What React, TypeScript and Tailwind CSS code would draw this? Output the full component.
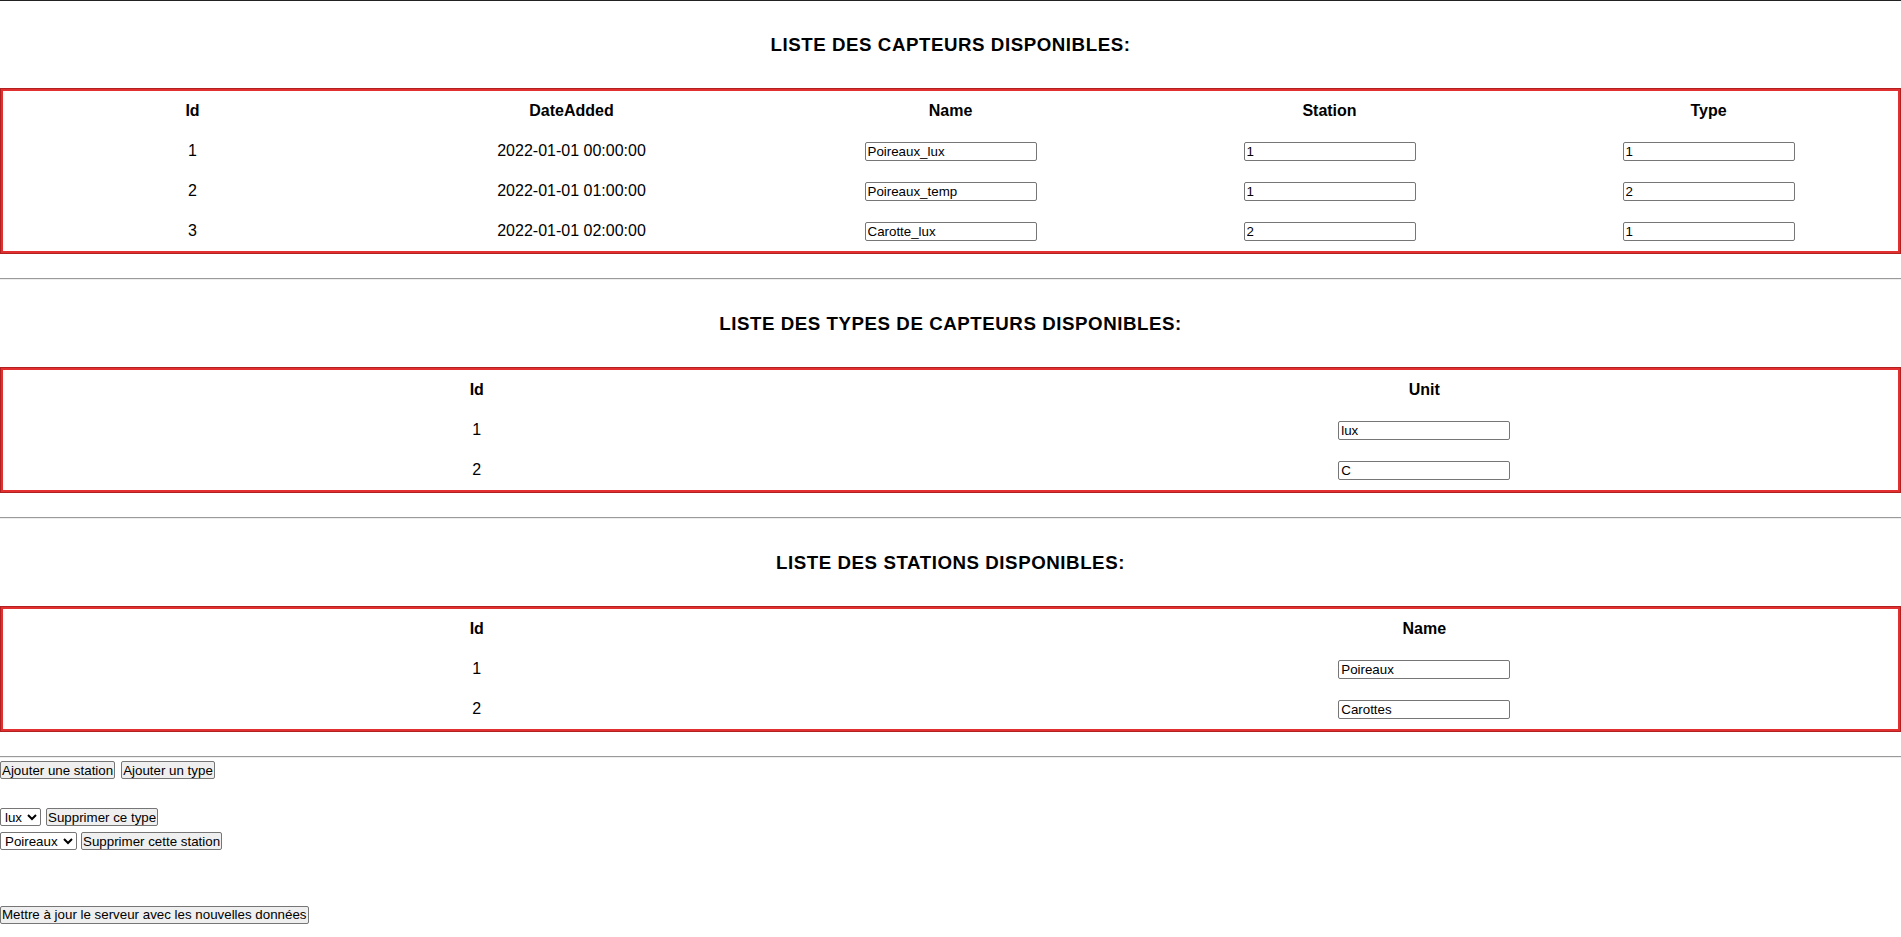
const SENSORS = [
  { id: 1, date: '2022-01-01 00:00:00', name: 'Poireaux_lux', station: '1', type: '1' },
  { id: 2, date: '2022-01-01 01:00:00', name: 'Poireaux_temp', station: '1', type: '2' },
  { id: 3, date: '2022-01-01 02:00:00', name: 'Carotte_lux', station: '2', type: '1' },
]

const TYPES = [
  { id: 1, unit: 'lux' },
  { id: 2, unit: 'C' },
]

const STATIONS = [
  { id: 1, name: 'Poireaux' },
  { id: 2, name: 'Carottes' },
]

const font = "font-['Liberation_Sans',Arial,sans-serif]"

function Field({ value }: { value: string }) {
  return (
    <input
      defaultValue={value}
      className="w-[172px] h-[19px] border border-[#767676] rounded-[2px] bg-white px-[2px] text-left text-[13.33px] leading-[15px] text-black align-middle"
    />
  )
}

function Heading({ children }: { children: string }) {
  return (
    <div className="h-[87px] flex items-center justify-center">
      <h3 className="text-[18.72px] font-bold tracking-[0.55px] leading-[22px]">{children}</h3>
    </div>
  )
}

function Table({ cols, rows }: { cols: string[]; rows: React.ReactNode[][] }) {
  return (
    <div className="border border-[#b32020]">
      <table className="w-full table-fixed border-separate border-spacing-0 border-2 border-[#e23030]">
        <thead>
          <tr>
            {cols.map(c => (
              <th key={c} className="h-[40px] p-0 font-bold text-center align-middle">{c}</th>
            ))}
          </tr>
        </thead>
        <tbody>
          {rows.map((r, i) => (
            <tr key={i}>
              {r.map((cell, j) => (
                <td key={j} className="h-[40px] p-0 text-center align-middle">{cell}</td>
              ))}
            </tr>
          ))}
        </tbody>
      </table>
    </div>
  )
}

function Rule() {
  return <div className="mt-[24px] h-[2px] border-t border-t-[#9a9a9a] border-b border-b-[#eeeeee]" />
}

const btn = 'h-[18px] px-[1px] border border-[#767676] rounded-[2px] bg-[#efefef] text-[13.33px] leading-[15px] text-black whitespace-nowrap'
const sel = 'h-[18px] border border-[#767676] rounded-[2px] bg-white text-[13.33px] leading-[15px] text-black'

export default function App() {
  return (
    <div className={`${font} min-h-[937px] bg-white text-black text-[16px]`}>
      <div className="h-px bg-[#222]" />

      <Heading>LISTE DES CAPTEURS DISPONIBLES:</Heading>
      <Table
        cols={['Id', 'DateAdded', 'Name', 'Station', 'Type']}
        rows={SENSORS.map(s => [
          s.id,
          s.date,
          <Field value={s.name} />,
          <Field value={s.station} />,
          <Field value={s.type} />,
        ])}
      />

      <Rule />
      <Heading>LISTE DES TYPES DE CAPTEURS DISPONIBLES:</Heading>
      <Table cols={['Id', 'Unit']} rows={TYPES.map(t => [t.id, <Field value={t.unit} />])} />

      <Rule />
      <Heading>LISTE DES STATIONS DISPONIBLES:</Heading>
      <Table cols={['Id', 'Name']} rows={STATIONS.map(s => [s.id, <Field value={s.name} />])} />

      <Rule />
      <div className="mt-[3px] flex gap-[6px]">
        <button className={btn}>Ajouter une station</button>
        <button className={btn}>Ajouter un type</button>
      </div>

      <div className="mt-[29px] flex gap-[5px] items-center">
        <select className={`${sel} w-[41px]`} defaultValue="lux">
          {TYPES.map(t => <option key={t.id}>{t.unit}</option>)}
        </select>
        <button className={btn}>Supprimer ce type</button>
      </div>
      <div className="mt-[6px] flex gap-[4px] items-center">
        <select className={`${sel} w-[77px]`} defaultValue="Poireaux">
          {STATIONS.map(s => <option key={s.id}>{s.name}</option>)}
        </select>
        <button className={btn}>Supprimer cette station</button>
      </div>

      <div className="mt-[52px]">
        <button className={btn}>Mettre à jour le serveur avec les nouvelles données</button>
      </div>
    </div>
  )
}
